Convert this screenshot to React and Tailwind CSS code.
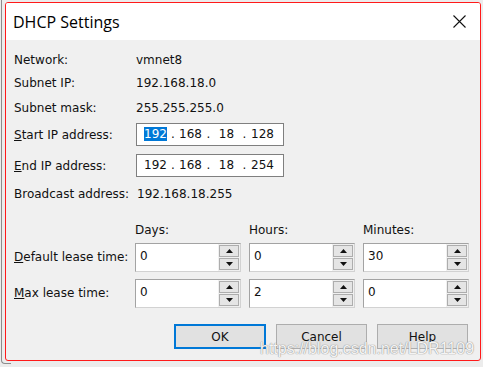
import React from 'react';

// Classic Windows "DHCP Settings" dialog
const UI = "font-['DejaVu_Sans',sans-serif] text-[12px] text-[#111]";

function Arrow({ up }) {
    return (
        <svg width="7" height="4" viewBox="0 0 7 4" className="block">
            {up ? <polygon points="3.5,0 7,4 0,4" fill="#111" /> : <polygon points="0,0 7,0 3.5,4" fill="#111" />}
        </svg>
    );
}

function Spin({ value }) {
    return (
        <div className="flex h-[29px] w-[106px] border border-[#a3a3a3] border-b-[#d2d2d2] border-r-[#d2d2d2] bg-white">
            <div className="flex flex-1 items-center pb-[3px] pl-[4px]">{value}</div>
            <div className="flex w-[22px] flex-col gap-[1px] bg-[#f0f0f0] py-[1px] pr-[1px] pl-[1px]">
                <div className="flex flex-1 items-center justify-center border border-[#adadad] bg-[#e5e5e5]">
                    <Arrow up />
                </div>
                <div className="flex flex-1 items-center justify-center border border-[#adadad] bg-[#e5e5e5]">
                    <Arrow />
                </div>
            </div>
        </div>
    );
}

function IpBox({ octets, selected }) {
    const dots = ['w-[10px]', 'w-[11px]', 'w-[11px]'];
    return (
        <div className="flex h-[23px] w-[148px] items-center border border-[#7f7f7f] bg-white pl-[6px] pb-[1px]">
            {octets.map((o, i) => (
                <React.Fragment key={i}>
                    <span className="flex w-[25px] justify-center">
                        {selected && i === 0 ? (
                            <span className="bg-[#0078d7] leading-[14px] text-white">{o}</span>
                        ) : (
                            o
                        )}
                    </span>
                    {i < 3 && <span className={`${dots[i]} text-center`}>.</span>}
                </React.Fragment>
            ))}
        </div>
    );
}

function Row({ label, children, className }) {
    return (
        <div className={`flex items-center ${className}`}>
            <div className="w-[122px] shrink-0">{label}</div>
            {children}
        </div>
    );
}

export default function App() {
    return (
        <div className={`relative h-[367px] w-[483px] overflow-hidden bg-[#ececec] ${UI}`}>
            {/* edge of the window behind */}
            <div className="absolute left-[1px] top-0 h-[364px] w-[10px] rounded-bl-[4px] border-b border-l border-[#8c8c8c]" />

            <div className="relative ml-[5px] mt-[2px] flex h-[359px] w-[476px] flex-col overflow-hidden rounded-[3px] border border-[#ff1a1a] bg-[#f0f0f0]">
                {/* title bar */}
                <div className="flex h-[37px] shrink-0 items-center justify-between bg-white pl-[7px] pr-[14px]">
                    <span className="font-['Open_Sans',sans-serif] text-[16px] text-black">DHCP Settings</span>
                    <svg width="13" height="13" viewBox="0 0 13 13">
                        <path d="M0.5 0.5 L12.5 12.5 M12.5 0.5 L0.5 12.5" stroke="#111" strokeWidth="1.1" />
                    </svg>
                </div>

                <div className="flex flex-col pl-[8px] pt-[10px]">
                    <Row label="Network:" className="h-[20px]">vmnet8</Row>
                    <Row label="Subnet IP:" className="mt-[3px] h-[20px]">192.168.18.0</Row>
                    <Row label="Subnet mask:" className="mt-[5px] h-[20px]">255.255.255.0</Row>
                    <Row label={<><u>S</u>tart IP address:</>} className="mt-[5px] h-[23px]">
                        <IpBox octets={['192', '168', '18', '128']} selected />
                    </Row>
                    <Row label={<><u>E</u>nd IP address:</>} className="mt-[8px] h-[23px]">
                        <IpBox octets={['192', '168', '18', '254']} />
                    </Row>
                    <div className="mt-[7px] flex h-[20px] items-center">
                        <span className="w-[123px] shrink-0">Broadcast address:</span>192.168.18.255
                    </div>

                    <div className="mt-[16px] flex h-[20px] items-center pl-[121px]">
                        <span className="w-[114px]">Days:</span>
                        <span className="w-[114px]">Hours:</span>
                        <span>Minutes:</span>
                    </div>
                    <div className="mt-[3px] flex items-center">
                        <span className="w-[121px] shrink-0 pb-[1px]"><u>D</u>efault lease time:</span>
                        <div className="flex gap-[8px]">
                            <Spin value="0" />
                            <Spin value="0" />
                            <Spin value="30" />
                        </div>
                    </div>
                    <div className="mt-[7px] flex items-center">
                        <span className="w-[121px] shrink-0 pb-[1px]"><u>M</u>ax lease time:</span>
                        <div className="flex gap-[8px]">
                            <Spin value="0" />
                            <Spin value="2" />
                            <Spin value="0" />
                        </div>
                    </div>

                    <div className="mt-[16px] flex justify-end gap-[10px] pr-[12px]">
                        <button className="flex h-[25px] w-[92px] items-center justify-center border-2 border-[#0078d7] bg-[#e1e1e1]">OK</button>
                        <button className="flex h-[25px] w-[91px] items-center justify-center border border-[#adadad] bg-[#e1e1e1]">Cancel</button>
                        <button className="flex h-[25px] w-[91px] items-center justify-center border border-[#adadad] bg-[#e1e1e1]">Help</button>
                    </div>
                </div>

                {/* watermark */}
                <span className="absolute left-[254px] top-[337px] font-['Liberation_Sans',sans-serif] text-[16px] leading-[18px] text-white/90 [text-shadow:0_0_1px_#8f8f8f,0_0_1px_#8f8f8f]">
                    https://blog.csdn.net/LDR1109
                </span>
            </div>
        </div>
    );
}
